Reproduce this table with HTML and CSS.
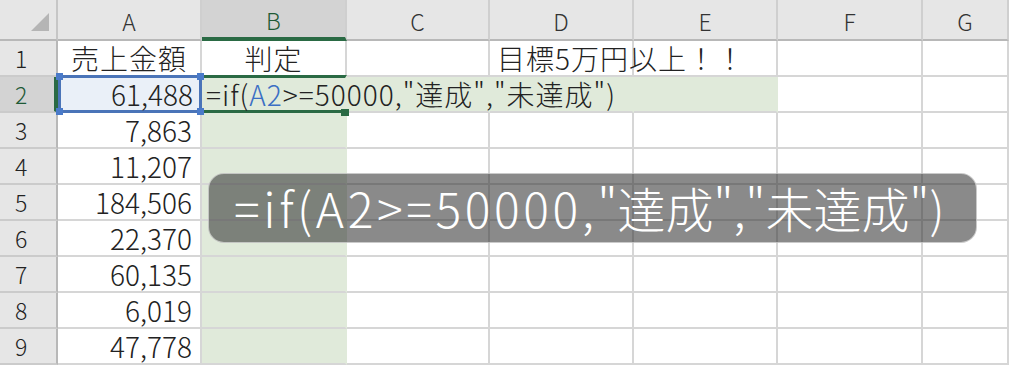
FILE: index.html
```html
<!DOCTYPE html>
<html lang="ja">
<head>
  <meta charset="UTF-8">
  <title>売上判定</title>
  <link rel="stylesheet" href="styles.css">
</head>
<body>
  <div class="sheet">
    <!-- column headers -->
    <div class="corner"><span class="tri"></span></div>
    <div class="col-head">A</div>
    <div class="col-head active">B</div>
    <div class="col-head">C</div>
    <div class="col-head">D</div>
    <div class="col-head">E</div>
    <div class="col-head">F</div>
    <div class="col-head">G</div>

    <!-- row 1 -->
    <div class="row-head">1</div>
    <div class="cell center">売上金額</div>
    <div class="cell center">判定</div>
    <div class="cell"></div>
    <div class="cell note">目標5万円以上！！</div>
    <div class="cell"></div>
    <div class="cell"></div>
    <div class="cell"></div>

    <!-- row 2: editing B2 -->
    <div class="row-head active">2</div>
    <div class="cell num ref">61,488
      <span class="handle tl"></span><span class="handle tr"></span>
      <span class="handle bl"></span><span class="handle br"></span>
    </div>
    <div class="cell editing">=if(<span class="ref-text">A2</span>&gt;=50000,"達成","未達成")<span class="fill-handle"></span></div>
    <div class="cell spill"></div>
    <div class="cell spill"></div>
    <div class="cell spill"></div>
    <div class="cell"></div>
    <div class="cell"></div>

    <div class="row-head">3</div>
    <div class="cell num">7,863</div>
    <div class="cell picked"></div>
    <div class="cell"></div><div class="cell"></div><div class="cell"></div><div class="cell"></div><div class="cell"></div>

    <div class="row-head">4</div>
    <div class="cell num">11,207</div>
    <div class="cell picked"></div>
    <div class="cell"></div><div class="cell"></div><div class="cell"></div><div class="cell"></div><div class="cell"></div>

    <div class="row-head">5</div>
    <div class="cell num">184,506</div>
    <div class="cell picked"></div>
    <div class="cell"></div><div class="cell"></div><div class="cell"></div><div class="cell"></div><div class="cell"></div>

    <div class="row-head">6</div>
    <div class="cell num">22,370</div>
    <div class="cell picked"></div>
    <div class="cell"></div><div class="cell"></div><div class="cell"></div><div class="cell"></div><div class="cell"></div>

    <div class="row-head">7</div>
    <div class="cell num">60,135</div>
    <div class="cell picked"></div>
    <div class="cell"></div><div class="cell"></div><div class="cell"></div><div class="cell"></div><div class="cell"></div>

    <div class="row-head">8</div>
    <div class="cell num">6,019</div>
    <div class="cell picked"></div>
    <div class="cell"></div><div class="cell"></div><div class="cell"></div><div class="cell"></div><div class="cell"></div>

    <div class="row-head">9</div>
    <div class="cell num">47,778</div>
    <div class="cell picked"></div>
    <div class="cell"></div><div class="cell"></div><div class="cell"></div><div class="cell"></div><div class="cell"></div>
  </div>

  <div class="caption"><span class="latin">=if(A2&gt;=50000,</span>"達成","未達成")</div>
</body>
</html>
```

FILE: styles.css
```css
body {
  margin: 0;
  padding: 0;
  background-color: #ffffff;
  font-family: 'Noto Sans CJK JP', sans-serif;
  color: #222;
  overflow: hidden;
}
.sheet {
  display: grid;
  grid-template-columns: 58px 144px 145px 143px 144px 144px 145px 86px;
  grid-template-rows: 41px repeat(9, 36px);
  width: 1009px;
  height: 365px;
}
.corner {
  background-color: #e6e6e6;
  border-right: 2px solid #c6c6c6;
  border-bottom: 2px solid #b8b8b8;
  box-sizing: border-box;
  display: flex;
  align-items: flex-end;
  justify-content: flex-end;
  padding: 0 7px 8px 0;
}
.corner .tri {
  width: 0;
  height: 0;
  border-left: 18px solid transparent;
  border-bottom: 18px solid #b5b5b5;
}
.col-head {
  background-color: #e6e6e6;
  border-right: 2px solid #cfcfcf;
  border-bottom: 2px solid #b8b8b8;
  box-sizing: border-box;
  font-size: 23px;
  font-weight: 300;
  color: #333;
  display: flex;
  align-items: center;
  justify-content: center;
  padding-top: 2px;
}
.col-head.active {
  background-color: #d3d3d3;
  border-bottom: 4px solid #2a6a44;
  color: #1e5a36;
}
.row-head {
  background-color: #e6e6e6;
  border-right: 2px solid #b8b8b8;
  border-bottom: 2px solid #cbcbcb;
  box-sizing: border-box;
  font-size: 23px;
  font-weight: 300;
  color: #222;
  display: flex;
  align-items: center;
  padding-left: 15px;
}
.row-head.active {
  background-color: #d3d3d3;
  border-right: 4px solid #2a6a44;
  color: #1e5a36;
}
.cell {
  border-right: 2px solid #d6d6d6;
  border-bottom: 2px solid #d6d6d6;
  box-sizing: border-box;
  font-size: 28px;
  font-weight: 300;
  line-height: 34px;
  white-space: nowrap;
  display: flex;
  align-items: center;
  position: relative;
}
.cell.center {
  justify-content: center;
  letter-spacing: 1px;
}
.cell.num {
  justify-content: flex-end;
  padding-right: 8px;
}
.cell.note {
  overflow: visible;
  padding-left: 7px;
  letter-spacing: 1px;
  z-index: 1;
}
.cell.picked {
  background-color: #e0eada;
  border-right-color: #e0eada;
}
.cell.spill {
  background-color: #e0eada;
  border-right-color: #e0eada;
  border-bottom-color: #d6d6d6;
}
.cell.editing {
  background-color: #e0eada;
  border-top: 3px solid #2a6a44;
  border-bottom: 3px solid #2a6a44;
  border-right-color: #e0eada;
  margin-top: -2px;
  padding-left: 4px;
  letter-spacing: 1px;
  z-index: 2;
  overflow: visible;
}
.ref-text {
  color: #3b6fc4;
}
.fill-handle {
  position: absolute;
  right: -4px;
  bottom: -6px;
  width: 8px;
  height: 7px;
  background-color: #2a6a44;
}
/* blue box around the referenced cell */
.cell.ref {
  background-color: #eaf0f8;
  border: 3px solid #4a74b8;
  margin-top: -2px;
  padding-right: 6px;
  z-index: 3;
}
.handle {
  position: absolute;
  width: 7px;
  height: 7px;
  background-color: #4a7ac9;
}
.handle.tl { left: -5px; top: -5px; }
.handle.tr { right: -5px; top: -5px; }
.handle.bl { left: -5px; bottom: -5px; }
.handle.br { right: -5px; bottom: -5px; }

.caption {
  position: absolute;
  left: 208px;
  top: 173px;
  width: 769px;
  height: 70px;
  box-sizing: border-box;
  padding: 0 0 3px 25px;
  border-radius: 16px;
  border: 1px solid rgba(255, 255, 255, 0.55);
  background-color: rgba(46, 46, 46, 0.56);
  color: #ffffff;
  font-size: 48px;
  font-weight: 300;
  display: flex;
  align-items: center;
  white-space: nowrap;
  z-index: 10;
}
.caption .latin {
  letter-spacing: 3.6px;
}
```
